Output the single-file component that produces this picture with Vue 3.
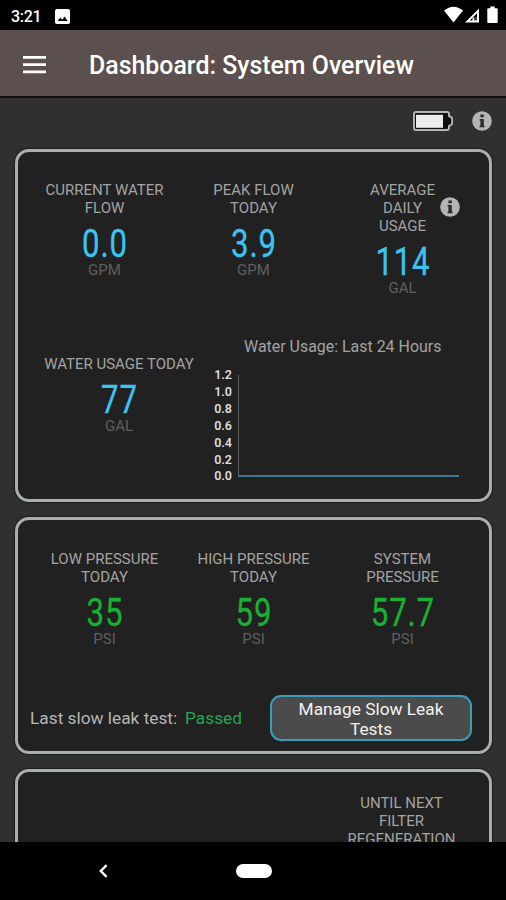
<template>
  <div class="phone">
    <div class="status-bar">
      <span class="clock">3:21</span>
      <svg class="photo-icon" width="15" height="15" viewBox="0 0 15 15">
        <rect width="15" height="15" rx="1.8" fill="#fff" />
        <path d="M2.6 12 L5.3 8.6 L7.2 10.8 L9.6 7.6 L12.6 12 Z" fill="#000" />
      </svg>
      <div class="status-icons">
        <svg width="38" height="18" viewBox="0 0 38 18">
          <path d="M0 4.6 Q9.5 -3.2 19 4.6 L9.5 16.6 Z" fill="#fff" />
          <path d="M35 2.4 V16.4 H21 Z M33 7.2 L25.8 14.6 H28.5 V11.8 H33 Z" fill="#fff" fill-rule="evenodd" />
          <path d="M30 11.4 H33 V14.4 H30 Z" fill="#444" />
        </svg>
        <svg width="11" height="18" viewBox="0 0 11 18">
          <path d="M3.3 0.6 h4.4 v1.6 h2 q1 0 1 1 v12.9 q0 1 -1 1 h-8.4 q-1 0 -1 -1 v-12.9 q0 -1 1 -1 h2 z" fill="#fff" />
        </svg>
      </div>
    </div>

    <header class="app-bar">
      <svg class="menu" width="23" height="18" viewBox="0 0 23 18">
        <path d="M0 1.4 H23 M0 8.6 H23 M0 15.8 H23" stroke="#fff" stroke-width="2.8" />
      </svg>
      <h1>Dashboard: System Overview</h1>
    </header>

    <main class="content">
      <div class="tools">
        <svg width="40" height="20" viewBox="0 0 40 20">
          <path d="M3 1 H34 Q36 1 36 3 V5 Q39.2 6 39.2 8 V12 Q39.2 14 36 15 V17 Q36 19 34 19 H3 Q1 19 1 17 V3 Q1 1 3 1 Z" fill="#111" stroke="#b4b4b4" stroke-width="2" />
          <rect x="3" y="3.8" width="27" height="13" fill="#ededed" />
        </svg>
        <svg width="20" height="20" viewBox="0 0 20 20">
          <circle cx="10" cy="10" r="9.8" fill="#b4b4b4" />
          <path d="M8.4 3.6 h3.4 v2.6 h-3.4 z M7.6 8 h4.2 v6.8 h.8 v1.4 h-5 v-1.4 h.8 v-5.4 h-.8 z" fill="#2b2b2b" />
        </svg>
      </div>

      <section class="card card-flow">
        <div class="row">
          <div v-for="item in flow" :key="item.label" class="metric blue">
            <div class="label">{{ item.label }}</div>
            <div class="value">{{ item.value }}</div>
            <div class="unit">{{ item.unit }}</div>
            <svg v-if="item.info" class="info" width="20" height="20" viewBox="0 0 20 20">
              <circle cx="10" cy="10" r="9.8" fill="#b4b4b4" />
              <path d="M8.4 3.6 h3.4 v2.6 h-3.4 z M7.6 8 h4.2 v6.8 h.8 v1.4 h-5 v-1.4 h.8 v-5.4 h-.8 z" fill="#2b2b2b" />
            </svg>
          </div>
        </div>
        <div class="row usage-row">
          <div class="metric today blue">
            <div class="label">WATER USAGE TODAY</div>
            <div class="value">77</div>
            <div class="unit">GAL</div>
          </div>
          <div class="chart">
            <div class="chart-title">Water Usage: Last 24 Hours</div>
            <div class="plot">
              <div class="ticks">
                <span v-for="tick in ticks" :key="tick">{{ tick }}</span>
              </div>
              <div class="area"></div>
            </div>
          </div>
        </div>
      </section>

      <section class="card card-pressure">
        <div class="row">
          <div v-for="item in pressure" :key="item.label" class="metric green">
            <div class="label">{{ item.label }}</div>
            <div class="value">{{ item.value }}</div>
            <div class="unit">{{ item.unit }}</div>
          </div>
        </div>
        <div class="leak">
          <span class="leak-label">Last slow leak test:</span>
          <span class="leak-result">Passed</span>
          <button class="leak-button">Manage Slow Leak Tests</button>
        </div>
      </section>

      <section class="card card-filter">
        <div class="label filter-label">{{ filterLabel }}</div>
      </section>
    </main>

    <nav class="nav-bar">
      <svg class="back" width="9" height="14" viewBox="0 0 9 14">
        <path d="M7.6 1.2 L1.8 7 L7.6 12.8" fill="none" stroke="#fff" stroke-width="2.4" />
      </svg>
      <span class="home"></span>
    </nav>
  </div>
</template>

<script setup>
import { ref } from 'vue';

const flow = ref([
  { label: 'CURRENT WATER\nFLOW', value: '0.0', unit: 'GPM' },
  { label: 'PEAK FLOW\nTODAY', value: '3.9', unit: 'GPM' },
  { label: 'AVERAGE\nDAILY\nUSAGE', value: '114', unit: 'GAL', info: true },
]);

const pressure = ref([
  { label: 'LOW PRESSURE\nTODAY', value: '35', unit: 'PSI' },
  { label: 'HIGH PRESSURE\nTODAY', value: '59', unit: 'PSI' },
  { label: 'SYSTEM\nPRESSURE', value: '57.7', unit: 'PSI' },
]);

const filterLabel = 'UNTIL NEXT\nFILTER\nREGENERATION';
const ticks = ['1.2', '1.0', '0.8', '0.6', '0.4', '0.2', '0.0'];
</script>

<style>
body {
  margin: 0;
  background: #000;
}
</style>

<style scoped>
.phone {
  width: 506px;
  height: 900px;
  display: flex;
  flex-direction: column;
  overflow: hidden;
  background: #000;
  font-family: Roboto, "Liberation Sans", sans-serif;
}

svg {
  display: block;
  flex: none;
}

.status-bar {
  height: 30px;
  flex: none;
  display: flex;
  align-items: center;
  box-sizing: border-box;
  padding: 2px 8px 0 11px;
  color: #fff;
}

.clock {
  width: 44px;
  font-size: 16px;
  font-weight: 500;
  letter-spacing: -0.3px;
}

.status-icons {
  display: flex;
  gap: 5px;
  margin-left: auto;
  margin-top: -3px;
}

.app-bar {
  height: 68px;
  flex: none;
  box-sizing: border-box;
  display: flex;
  align-items: center;
  padding: 4px 0 0 23px;
  background: #5b504d;
  border-bottom: 2px solid #120b0a;
}

.app-bar h1 {
  margin: 1px 0 0 43px;
  font-size: 24.9px;
  line-height: 30px;
  font-weight: 500;
  color: #fff;
  white-space: nowrap;
}

.content {
  height: 744px;
  flex: none;
  overflow: hidden;
  background: #303030;
}

.tools {
  height: 51px;
  box-sizing: border-box;
  display: flex;
  justify-content: flex-end;
  gap: 19px;
  padding: 13px 14px 0 0;
}

.card {
  box-sizing: border-box;
  margin: 0 14px 15px 15px;
  padding: 0 12px;
  border: 3px solid #a9afac;
  border-radius: 14px;
  background: #212121;
  box-shadow: 0 0 1px 1px #1c1c1c;
}

.card-flow {
  height: 353px;
  padding-top: 29px;
}

.card-pressure {
  height: 237px;
  padding-top: 30px;
}

.card-filter {
  height: 180px;
  padding-top: 22px;
}

.row {
  display: flex;
  height: 133px;
}

.metric {
  position: relative;
  width: 149px;
  flex: none;
  text-align: center;
}

.label {
  font-size: 15px;
  line-height: 18px;
  color: #a3a3a3;
  white-space: pre-line;
}

.value {
  margin-top: 9px;
  padding-left: 1px;
  font-size: 39px;
  line-height: 36px;
  letter-spacing: 1px;
  transform: scaleX(0.8);
  -webkit-text-stroke: 0.3px currentColor;
}

.blue .value {
  color: #3cc4f0;
}

.green .value {
  color: #18b132;
}

.unit {
  font-size: 15px;
  line-height: 17px;
  color: #5f5f5f;
}

.info {
  position: absolute;
  top: 16px;
  left: 112px;
}

.usage-row {
  margin-top: 23px;
}

.today {
  width: 178px;
  padding-top: 18px;
}

.chart-title {
  margin-left: 36px;
  font-size: 15.95px;
  line-height: 20px;
  color: #a3a3a3;
  white-space: nowrap;
}

.plot {
  display: flex;
  margin-top: 10px;
}

.ticks {
  display: flex;
  flex-direction: column;
  width: 24px;
  margin-right: 6px;
  text-align: right;
}

.ticks span {
  font-size: 12.5px;
  line-height: 16.9px;
  font-weight: 600;
  color: #dcdcdc;
}

.area {
  width: 220px;
  height: 100px;
  margin-top: 8px;
  border-left: 1px solid #606060;
  border-bottom: 2px solid #40768f;
}

.leak {
  display: flex;
  align-items: center;
  margin-top: 12px;
  font-size: 17.3px;
  color: #b5b5b5;
  white-space: nowrap;
}

.leak-label {
  width: 155px;
}

.leak-result {
  width: 85px;
  color: #22a550;
}

.leak-button {
  width: 202px;
  height: 46px;
  box-sizing: border-box;
  padding: 2px 20px 0;
  border: 2px solid #3b9cba;
  border-radius: 11px;
  background: #4b4b4b;
  color: #f2f2f2;
  font-family: inherit;
  font-size: 17.3px;
  line-height: 20px;
  white-space: normal;
}

.filter-label {
  width: 149px;
  margin-left: 297px;
  text-align: center;
}

.nav-bar {
  height: 58px;
  flex: none;
  display: flex;
  align-items: center;
  padding-left: 99px;
}

.home {
  width: 36px;
  height: 14px;
  margin-left: 128px;
  border-radius: 7px;
  background: #fff;
}
</style>
